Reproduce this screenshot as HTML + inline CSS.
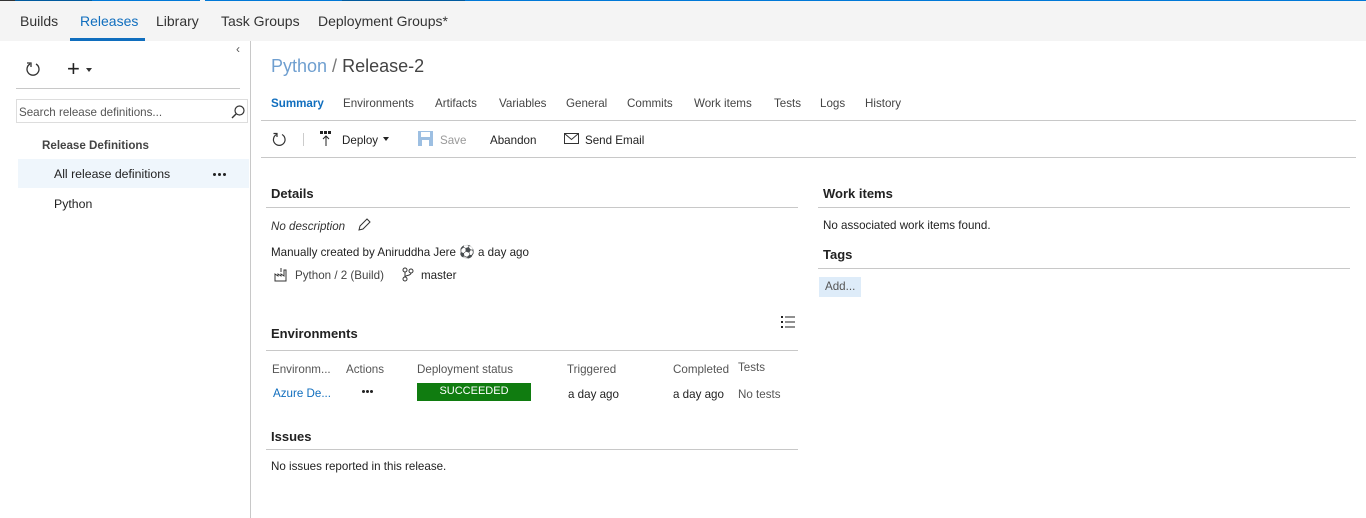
<!DOCTYPE html>
<html><head><meta charset="utf-8"><style>
*{margin:0;padding:0;box-sizing:border-box}
body{width:1366px;height:518px;overflow:hidden;background:#fff;font-family:"Liberation Sans",sans-serif;font-size:11.6px;color:#222;position:relative}
.a{position:absolute;white-space:nowrap}
.hr{position:absolute;height:1px;background:#c8c8c8}
.h{font-weight:bold;font-size:13px;color:#222}
.tab{font-size:11.6px;color:#444}
.dots{position:absolute;}
.dots i{position:absolute;width:3px;height:3px;border-radius:50%;background:#222;top:0}
</style></head><body>
<div class="a" style="left:0;top:0;width:1366px;height:41px;background:#f4f4f4"></div>
<div class="a" style="left:0;top:0;width:15px;height:1px;background:#333"></div>
<div class="a" style="left:15px;top:0;width:77px;height:1px;background:#005a9e"></div>
<div class="a" style="left:92px;top:0;width:108px;height:1px;background:#0078d7"></div>
<div class="a" style="left:205px;top:0;width:137px;height:1px;background:#0078d7"></div>
<div class="a" style="left:342px;top:0;width:123px;height:1px;background:#005a9e"></div>
<div class="a" style="left:465px;top:0;width:901px;height:1px;background:#0078d7"></div>
<div class="a" style="left:20px;top:13px;font-size:14px;color:#333">Builds</div>
<div class="a" style="left:80px;top:13px;font-size:14px;color:#106ebe">Releases</div>
<div class="a" style="left:70px;top:38px;width:75px;height:3px;background:#106ebe"></div>
<div class="a" style="left:156px;top:13px;font-size:14px;color:#333">Library</div>
<div class="a" style="left:221px;top:13px;font-size:14px;color:#333">Task Groups</div>
<div class="a" style="left:318px;top:13px;font-size:14px;color:#333">Deployment Groups*</div>

<div class="a" style="left:250px;top:41px;width:1px;height:477px;background:#c8c8c8"></div>
<div class="a" style="left:236px;top:42px;font-size:12px;color:#555">‹</div>
<svg class="a" style="left:25px;top:61px" width="16" height="16"><path d="M5 3A6 6 0 1 0 11 3" fill="none" stroke="#333" stroke-width="1.3"/><path d="M2 2h4v4" fill="none" stroke="#333" stroke-width="1.3"/></svg>
<div class="a" style="left:67px;top:56px;font-size:22px;color:#222">+</div>
<div class="a" style="left:86px;top:68px;width:0;height:0;border-left:3.5px solid transparent;border-right:3.5px solid transparent;border-top:4px solid #333"></div>
<div class="hr" style="left:16px;top:88px;width:224px"></div>
<div class="a" style="left:16px;top:99px;width:232px;height:24px;border:1px solid #ddd"></div>
<div class="a" style="left:19px;top:106px;color:#555;font-size:11.6px">Search release definitions...</div>
<svg class="a" style="left:230px;top:104px" width="16" height="16"><circle cx="9.5" cy="6.5" r="4.5" fill="none" stroke="#333" stroke-width="1.2"/><line x1="6" y1="10" x2="2" y2="14" stroke="#333" stroke-width="1.4"/></svg>
<div class="a" style="left:42px;top:139px;font-weight:bold;color:#444">Release Definitions</div>
<div class="a" style="left:18px;top:159px;width:231px;height:29px;background:#eff6fc"></div>
<div class="a" style="left:54px;top:167px;font-size:12.3px;color:#222">All release definitions</div>
<div class="dots" style="left:213px;top:173px"><i style="left:0"></i><i style="left:5px"></i><i style="left:10px"></i></div>
<div class="a" style="left:54px;top:197px;font-size:12.3px;color:#222">Python</div>

<div class="a" style="left:271px;top:56px;font-size:18px;color:#6f9fd0">Python <span style="color:#777">/</span> <span style="color:#444">Release-2</span></div>
<div class="a tab" style="left:271px;top:97px;color:#106ebe;font-weight:bold">Summary</div>
<div class="a tab" style="left:343px;top:97px">Environments</div>
<div class="a tab" style="left:435px;top:97px">Artifacts</div>
<div class="a tab" style="left:499px;top:97px">Variables</div>
<div class="a tab" style="left:566px;top:97px">General</div>
<div class="a tab" style="left:627px;top:97px">Commits</div>
<div class="a tab" style="left:694px;top:97px">Work items</div>
<div class="a tab" style="left:774px;top:97px">Tests</div>
<div class="a tab" style="left:820px;top:97px">Logs</div>
<div class="a tab" style="left:865px;top:97px">History</div>
<div class="hr" style="left:261px;top:120px;width:1095px"></div>
<svg class="a" style="left:272px;top:132px" width="15" height="15"><path d="M4.5 2.5A5.8 5.8 0 1 0 10 2.5" fill="none" stroke="#333" stroke-width="1.2"/><path d="M1.5 1.5h3.5v3.5" fill="none" stroke="#333" stroke-width="1.2"/></svg>
<div class="a" style="left:303px;top:133px;width:1px;height:13px;background:#ccc"></div>
<svg class="a" style="left:320px;top:131px" width="14" height="16"><rect x="0" y="0" width="3" height="3" fill="#222"/><rect x="4" y="0" width="3" height="3" fill="#222"/><rect x="8" y="0" width="3" height="3" fill="#222"/><path d="M6 15V5M3 8l3-3 3 3" stroke="#222" fill="none"/></svg>
<div class="a" style="left:342px;top:134px">Deploy</div>
<div class="a" style="left:383px;top:137px;border-left:3.5px solid transparent;border-right:3.5px solid transparent;border-top:4px solid #222"></div>
<svg class="a" style="left:418px;top:131px" width="15" height="15"><rect x="0" y="0" width="15" height="15" fill="#9dbfe2"/><rect x="3" y="1" width="9" height="5" fill="#fff"/><rect x="4" y="9" width="7" height="6" fill="#fff"/></svg>
<div class="a" style="left:440px;top:134px;color:#999">Save</div>
<div class="a" style="left:490px;top:134px">Abandon</div>
<svg class="a" style="left:564px;top:133px" width="15" height="11"><rect x="0.5" y="0.5" width="14" height="10" fill="none" stroke="#333"/><path d="M0.5 0.5l7 6 7-6" fill="none" stroke="#333"/></svg>
<div class="a" style="left:585px;top:134px">Send Email</div>
<div class="hr" style="left:261px;top:157px;width:1095px"></div>

<div class="a h" style="left:271px;top:186px">Details</div>
<div class="hr" style="left:266px;top:207px;width:532px"></div>
<div class="a" style="left:271px;top:220px;font-style:italic;color:#333">No description</div>
<svg class="a" style="left:357px;top:218px" width="14" height="14"><path d="M2 12l1-4 7-7 3 3-7 7z" fill="none" stroke="#333"/></svg>
<div class="a" style="left:271px;top:245px">Manually created by Aniruddha Jere <span style="font-size:12.5px">⚽</span> a day ago</div>
<svg class="a" style="left:274px;top:268px" width="14" height="14"><path d="M1 13V6l3 2V6l3 2V6l3 2V2h2v11z" fill="none" stroke="#333"/><path d="M7 0v4" stroke="#333"/></svg>
<div class="a" style="left:295px;top:269px;color:#444">Python / 2 (Build)</div>
<svg class="a" style="left:402px;top:267px" width="12" height="15"><circle cx="3" cy="3" r="2" fill="none" stroke="#333"/><circle cx="3" cy="12" r="2" fill="none" stroke="#333"/><circle cx="9" cy="4" r="2" fill="none" stroke="#333"/><path d="M3 5v5M9 6c0 3-6 2-6 4" fill="none" stroke="#333"/></svg>
<div class="a" style="left:421px;top:269px">master</div>

<div class="a h" style="left:271px;top:326px">Environments</div>
<svg class="a" style="left:781px;top:316px" width="14" height="13"><rect x="0" y="0" width="2" height="2" fill="#222"/><rect x="4" y="0.5" width="10" height="1" fill="#222"/><rect x="0" y="5" width="2" height="2" fill="#222"/><rect x="4" y="5.5" width="10" height="1" fill="#222"/><rect x="0" y="10" width="2" height="2" fill="#222"/><rect x="4" y="10.5" width="10" height="1" fill="#222"/></svg>
<div class="hr" style="left:266px;top:350px;width:532px"></div>
<div class="a" style="left:272px;top:363px;color:#555">Environm...</div>
<div class="a" style="left:346px;top:363px;color:#555">Actions</div>
<div class="a" style="left:417px;top:363px;color:#555">Deployment status</div>
<div class="a" style="left:567px;top:363px;color:#555">Triggered</div>
<div class="a" style="left:673px;top:363px;color:#555">Completed</div>
<div class="a" style="left:738px;top:361px;color:#555">Tests</div>
<div class="a" style="left:273px;top:387px;color:#106ebe">Azure De...</div>
<div class="dots" style="left:362px;top:390px"><i style="left:0"></i><i style="left:4px"></i><i style="left:8px"></i></div>
<div class="a" style="left:417px;top:383px;width:114px;height:18px;background:#107c10;color:#fff;font-size:11px;text-align:center;line-height:17px">SUCCEEDED</div>
<div class="a" style="left:568px;top:388px">a day ago</div>
<div class="a" style="left:673px;top:388px">a day ago</div>
<div class="a" style="left:738px;top:388px;color:#555">No tests</div>

<div class="a h" style="left:271px;top:429px">Issues</div>
<div class="hr" style="left:266px;top:449px;width:532px"></div>
<div class="a" style="left:271px;top:460px">No issues reported in this release.</div>

<div class="a h" style="left:823px;top:186px">Work items</div>
<div class="hr" style="left:818px;top:207px;width:532px"></div>
<div class="a" style="left:823px;top:219px">No associated work items found.</div>
<div class="a h" style="left:823px;top:247px">Tags</div>
<div class="hr" style="left:818px;top:268px;width:532px"></div>
<div class="a" style="left:819px;top:277px;width:42px;height:20px;background:#deecf9;color:#555;line-height:20px;padding-left:6px">Add...</div>
</body></html>
